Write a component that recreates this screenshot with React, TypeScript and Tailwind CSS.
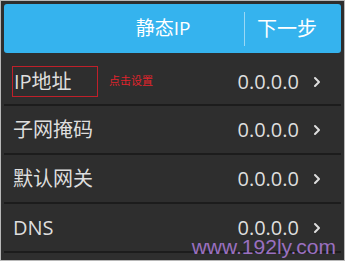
import { ChevronRight } from 'lucide-react'

const rows = [
  { label: 'IP地址', value: '0.0.0.0', hint: true },
  { label: '子网掩码', value: '0.0.0.0' },
  { label: '默认网关', value: '0.0.0.0' },
  { label: 'DNS', value: '0.0.0.0' },
]

export default function App() {
  return (
    <div
      className="relative w-[345px] h-[261px] overflow-hidden border border-[#b8b8b8] bg-[#2e2e2e] px-[3px] pt-[3px]"
      style={{ fontFamily: '"Open Sans", "Noto Sans CJK SC", sans-serif' }}
    >
      {/* Header */}
      <div className="flex h-[49px] items-center rounded-[3px] bg-[#35b3ee] text-white">
        <div className="flex-1 pl-[78px] text-center text-[19px]">静态IP</div>
        <div className="h-[34px] w-px bg-[#9ad8f5]" />
        <div className="w-[84px] text-center text-[20px]">下一步</div>
        <div className="w-[12px]" />
      </div>

      {/* Rows */}
      <div className="flex flex-col">
        {rows.map((row, i) => (
          <div
            key={row.label}
            className={
              i === 0
                ? 'flex h-[53px] items-center border-b-2 border-[#1c1c1c] pl-[8px] pr-[16px] pt-[6px]'
                : 'flex h-[49px] items-center border-b-2 border-[#1c1c1c] pl-[8px] pr-[16px]'
            }
          >
            {row.hint ? (
              <>
                <div className="flex h-[31px] w-[86px] items-center border border-[#c0202a] pl-[1px] text-[20px] text-[#dedede]">
                  {row.label}
                </div>
                <span className="ml-[11px] text-[11px] text-[#e0242c]">点击设置</span>
              </>
            ) : (
              <div className="pl-[1px] text-[20px] text-[#dedede]">{row.label}</div>
            )}
            <div className="ml-auto text-[20px] text-[#dedede]">{row.value}</div>
            <ChevronRight className="ml-[10px] h-[16px] w-[16px] text-[#dedede]" strokeWidth={3} />
          </div>
        ))}
      </div>

      {/* Watermark */}
      <div
        className="absolute bottom-[3px] right-[8px] text-[21px] leading-none text-[#9a70c0]"
        style={{ fontFamily: '"Liberation Sans", sans-serif' }}
      >
        www.192ly.com
      </div>
    </div>
  )
}
